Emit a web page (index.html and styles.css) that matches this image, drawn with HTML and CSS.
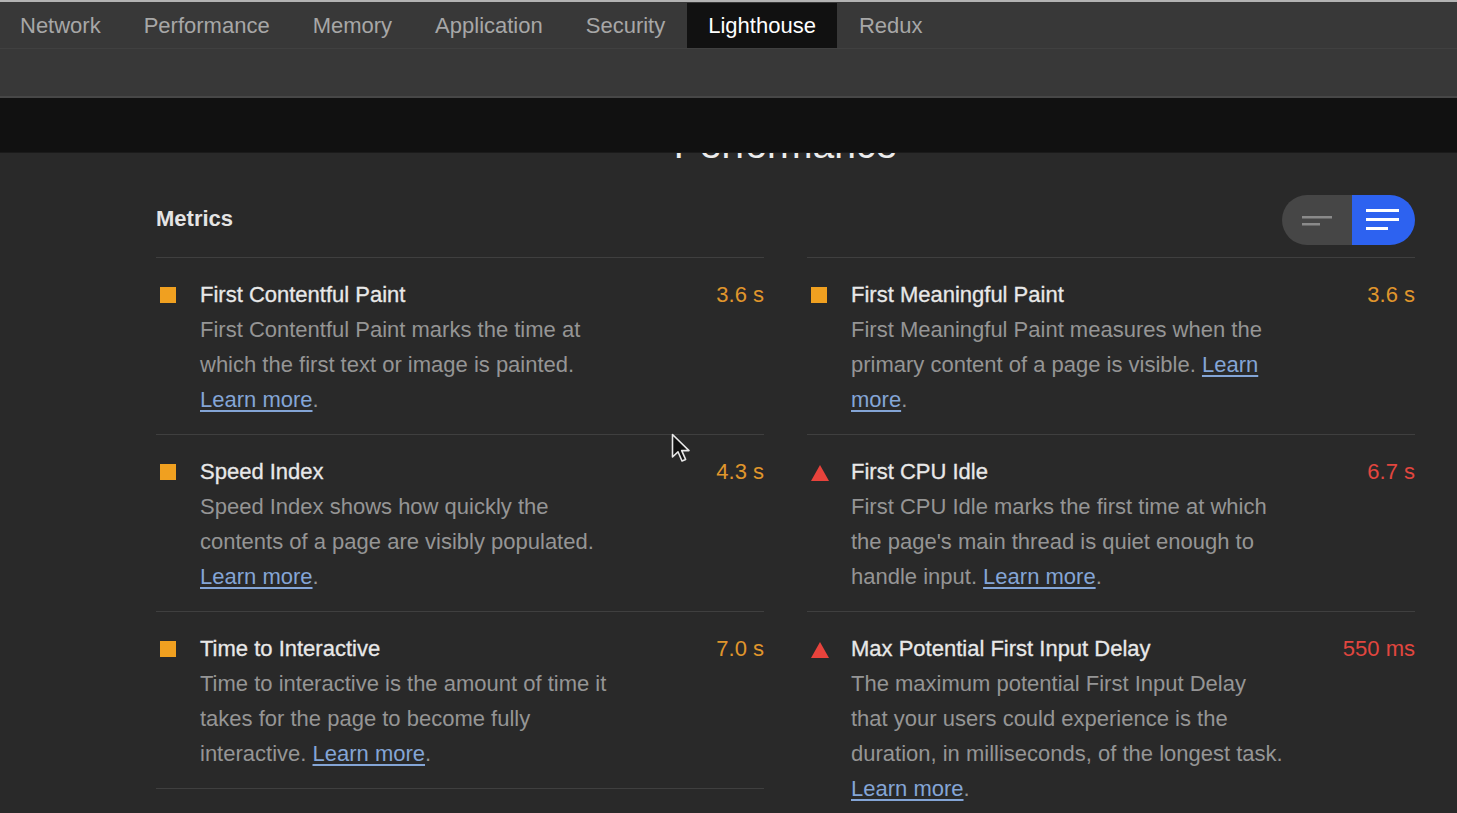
FILE: index.html
```html
<!DOCTYPE html>
<html lang="en">
<head>
<meta charset="utf-8">
<title>Lighthouse</title>
<link rel="stylesheet" href="styles.css">
</head>
<body>
<div class="topline"></div>
<nav class="tabbar">
  <span class="tab">Network</span>
  <span class="tab">Performance</span>
  <span class="tab">Memory</span>
  <span class="tab">Application</span>
  <span class="tab">Security</span>
  <span class="tab active">Lighthouse</span>
  <span class="tab">Redux</span>
</nav>
<div class="toolbar"></div>
<main class="main">
  <div class="sticky-header"></div>
  <div class="report">
    <div class="gauge-title">Performance</div>
    <div class="metrics-header">
      <h2 class="metrics-title">Metrics</h2>
      <div class="toggle">
        <span class="toggle-half toggle-off">
          <svg width="30" height="12" viewBox="0 0 30 12"><rect x="0" y="0" width="30" height="2.5" fill="#8a8a8a"/><rect x="0" y="7" width="18" height="2.5" fill="#8a8a8a"/></svg>
        </span>
        <span class="toggle-half toggle-on">
          <svg width="33" height="22" viewBox="0 0 33 22"><rect x="0" y="0" width="33" height="3" fill="#fff"/><rect x="0" y="9" width="33" height="3" fill="#fff"/><rect x="0" y="18" width="22" height="3" fill="#fff"/></svg>
        </span>
      </div>
    </div>
    <div class="metrics-grid">
      <div class="metric">
        <span class="icon"><span class="square"></span></span>
        <span class="m-title">First Contentful Paint</span>
        <span class="m-value avg">3.6 s</span>
        <p class="m-desc">First Contentful Paint marks the time at which the first text or image is painted. <a href="#">Learn more</a>.</p>
      </div>
      <div class="metric">
        <span class="icon"><span class="square"></span></span>
        <span class="m-title">First Meaningful Paint</span>
        <span class="m-value avg">3.6 s</span>
        <p class="m-desc">First Meaningful Paint measures when the primary content of a page is visible. <a href="#">Learn more</a>.</p>
      </div>
      <div class="metric">
        <span class="icon"><span class="square"></span></span>
        <span class="m-title">Speed Index</span>
        <span class="m-value avg">4.3 s</span>
        <p class="m-desc">Speed Index shows how quickly the contents of a page are visibly populated. <a href="#">Learn more</a>.</p>
      </div>
      <div class="metric">
        <span class="icon"><span class="triangle"></span></span>
        <span class="m-title">First CPU Idle</span>
        <span class="m-value fail">6.7 s</span>
        <p class="m-desc">First CPU Idle marks the first time at which the page's main thread is quiet enough to handle input. <a href="#">Learn more</a>.</p>
      </div>
      <div class="metric last">
        <span class="icon"><span class="square"></span></span>
        <span class="m-title">Time to Interactive</span>
        <span class="m-value avg">7.0 s</span>
        <p class="m-desc">Time to interactive is the amount of time it takes for the page to become fully interactive. <a href="#">Learn more</a>.</p>
      </div>
      <div class="metric last">
        <span class="icon"><span class="triangle"></span></span>
        <span class="m-title">Max Potential First Input Delay</span>
        <span class="m-value fail">550 ms</span>
        <p class="m-desc">The maximum potential First Input Delay that your users could experience is the duration, in milliseconds, of the longest task. <a href="#">Learn more</a>.</p>
      </div>
    </div>
  </div>
  <svg class="cursor" width="22" height="32" viewBox="0 0 22 32"><path d="M1.5 1.5 L1.5 24 L7 18.8 L11 28 L14.6 26.4 L10.7 17.6 L18 17.6 Z" fill="#111" stroke="#e8e8e8" stroke-width="1.6" stroke-linejoin="round"/></svg>
</main>
</body>
</html>
```
FILE: styles.css
```css
* { box-sizing: border-box; }

html, body {
  margin: 0;
  padding: 0;
  height: 100%;
}

body {
  background: #292929;
  font-family: "Liberation Sans", Arial, sans-serif;
  overflow: hidden;
  display: flex;
  flex-direction: column;
}

.topline {
  height: 2px;
  background: #b3b3b3;
  flex: none;
}

.tabbar {
  flex: none;
  display: flex;
  height: 47px;
  background: #383838;
  border-bottom: 1px solid #404040;
  padding-top: 1px;
}

.tab {
  padding: 0 21.5px;
  font-size: 22px;
  line-height: 45px;
  color: #a7a7a7;
  white-space: nowrap;
}

.tab:first-child {
  padding-left: 20px;
}

.tab.active {
  background: #111111;
  color: #ffffff;
}

.toolbar {
  flex: none;
  height: 49px;
  background: #383838;
  border-bottom: 2px solid #474747;
}

.main {
  position: relative;
  flex: 1;
  overflow: hidden;
}

.sticky-header {
  position: absolute;
  top: 0;
  left: 0;
  right: 0;
  height: 55px;
  background: #111111;
  border-bottom: 1px solid #1a1a1a;
  z-index: 2;
}

.report {
  padding: 0 42px 0 156px;
}

.gauge-title {
  margin-top: 24px;
  font-size: 39px;
  line-height: 45px;
  color: #ececec;
  text-align: center;
}

.metrics-header {
  margin-top: 28px;
  height: 50px;
  display: flex;
  align-items: center;
  justify-content: space-between;
}

.metrics-title {
  margin: 0 0 2px 0;
  font-size: 22px;
  font-weight: bold;
  color: #e4e4e4;
}

.toggle {
  display: flex;
  height: 50px;
  width: 133px;
  border-radius: 25px;
  overflow: hidden;
}

.toggle-half {
  flex: 1;
  display: flex;
  align-items: center;
}

.toggle-off {
  background: #464646;
  padding-left: 20px;
  padding-top: 3px;
}

.toggle-on {
  background: #2d62f0;
  padding-left: 14px;
}

.metrics-grid {
  margin-top: 12px;
  display: grid;
  grid-template-columns: 1fr 1fr;
  column-gap: 43px;
  align-items: start;
}

.metric {
  display: grid;
  grid-template-columns: 44px 1fr auto;
  border-top: 1px solid #3f3f3f;
  padding: 19px 0 17px;
  font-size: 22px;
  line-height: 35px;
}

.metric.last {
  border-bottom: 1px solid #3f3f3f;
}

.icon {
  display: flex;
  align-items: center;
  height: 35px;
  padding-left: 4px;
}

.square {
  width: 16px;
  height: 16px;
  background: #f0a020;
}

.triangle {
  width: 0;
  height: 0;
  margin-top: 2px;
  border-left: 9px solid transparent;
  border-right: 9px solid transparent;
  border-bottom: 16px solid #e8433c;
}

.m-title {
  color: #e8e8e8;
  -webkit-text-stroke: 0.3px #e8e8e8;
}

.m-value {
  text-align: right;
}

.m-value.avg { color: #e0962c; }
.m-value.fail { color: #e2463f; }

.m-desc {
  grid-column: 2 / 4;
  margin: 0;
  max-width: 434px;
  color: #959595;
}

.m-desc a {
  color: #84a5d6;
  text-decoration: underline;
  text-underline-offset: 3px;
}

.cursor {
  position: absolute;
  left: 671px;
  top: 335px;
  z-index: 3;
}
```
